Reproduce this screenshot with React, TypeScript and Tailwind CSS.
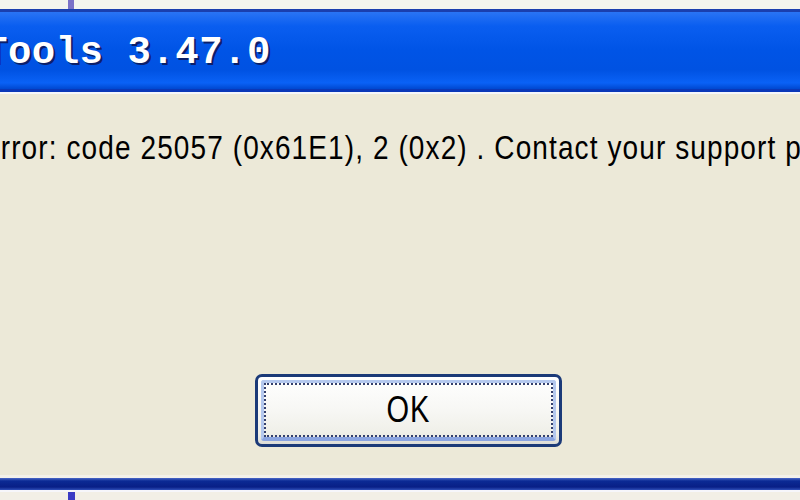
export default function App() {
  return (
    <div className="flex h-[500px] w-[800px] flex-col overflow-hidden bg-[#ece9d8] font-['Liberation_Sans',Arial,sans-serif]">
      {/* window behind, top edge */}
      <div className="flex h-[9px] shrink-0 bg-[#f3f5ee] pl-[68px]">
        <div className="h-full w-[6px] bg-[#7a72c8]" />
      </div>

      {/* title bar */}
      <div className="flex h-[83px] shrink-0 items-center border-t-[3px] border-b-[3px] border-t-[#1a3fae] border-b-[#0a38b8] bg-[linear-gradient(to_bottom,#2a74f4_0%,#0a5ef0_18%,#0054e6_50%,#0052e2_75%,#0a62f6_92%,#0048d0_100%)] pt-[5px]">
        <span className="ml-[-16px] whitespace-nowrap font-['Liberation_Mono',monospace] text-[39px] leading-none font-bold tracking-[0.5px] text-white [text-shadow:2px_2px_0_#0c1f6a]">
          Tools 3.47.0
        </span>
      </div>
      <div className="h-[2px] shrink-0 bg-[#f4f6fb]" />

      {/* dialog body */}
      <div className="flex flex-1 flex-col bg-[#ece9d8]">
        <p className="mt-[40px] ml-[-19px] origin-left scale-y-[1.2] whitespace-nowrap text-[28px] leading-none tracking-[1.1px] text-black">
          Error: code 25057 (0x61E1), 2 (0x2) . Contact your support personnel.
        </p>

        <div className="mt-[212px] ml-[255px] h-[73px] w-[307px] rounded-[7px] border-[3px] border-[#1b3a78] bg-[linear-gradient(to_bottom,#ffffff_0%,#f7f7f4_50%,#efefe8_85%,#dcdcd6_100%)] p-[3px]">
          <div className="h-full w-full rounded-[3px] border-[3px] border-b-[4px] border-[#b4c8ee] border-b-[#8aa4e0]">
            <div className="flex h-full w-full items-center justify-center border-[2px] border-dotted border-[#34406e]">
              <span className="scale-y-[1.25] text-[29px] leading-none tracking-[1px] text-black">OK</span>
            </div>
          </div>
        </div>
      </div>

      {/* next window, bottom edge */}
      <div className="h-[3px] shrink-0 bg-[#f3f1ea]" />
      <div className="h-[12px] shrink-0 bg-[linear-gradient(to_bottom,#4a68c8_0%,#0b2a94_25%,#081f86_75%,#2f4fb8_100%)]" />
      <div className="h-[2px] shrink-0 bg-[#f6f6fa]" />
      <div className="flex h-[8px] shrink-0 bg-[#f2efe6] pl-[68px]">
        <div className="h-full w-[7px] bg-[#3a3ac4]" />
      </div>
    </div>
  );
}
